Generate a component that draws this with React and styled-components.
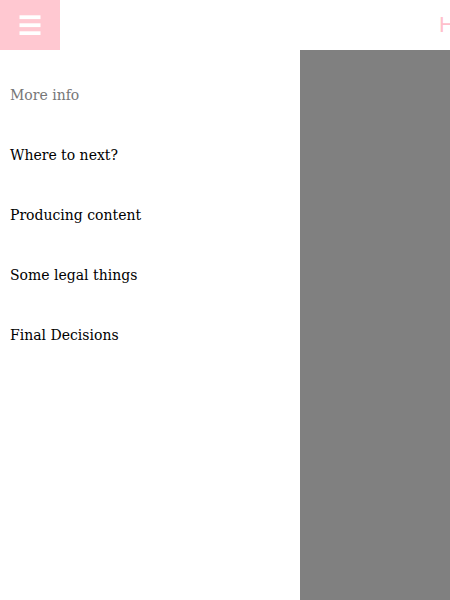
import styled, { createGlobalStyle } from 'styled-components';

const GlobalStyle = createGlobalStyle`
  html, body {
    margin: 0;
    padding: 0;
    background: #ffffff;
  }
  body {
    font-family: "DejaVu Serif", Georgia, serif;
    overflow: hidden;
  }
`;

const Page = styled.div`
  width: 450px;
  height: 600px;
  display: flex;
  flex-direction: column;
  overflow: hidden;
`;

const TopBar = styled.header`
  height: 50px;
  display: flex;
  align-items: center;
  overflow: hidden;
  flex-shrink: 0;
`;

const MenuButton = styled.button`
  flex-shrink: 0;
  width: 60px;
  height: 50px;
  border: none;
  padding: 0;
  background: #ffc8d1;
  display: flex;
  align-items: center;
  justify-content: center;
  cursor: pointer;
`;

const Title = styled.h1`
  flex-shrink: 0;
  margin: 0 0 0 379px;
  font-family: "Liberation Sans", Arial, sans-serif;
  font-weight: 400;
  font-size: 22px;
  color: #ffc0cb;
  white-space: nowrap;
`;

const Main = styled.div`
  flex: 1;
  display: flex;
`;

const Sidebar = styled.nav`
  width: 300px;
  flex-shrink: 0;
  padding-top: 15px;
`;

const NavItem = styled.a`
  display: flex;
  align-items: center;
  height: 60px;
  padding-left: 10px;
  font-size: 14px;
  color: ${p => (p.$muted ? '#777777' : '#000000')};
  text-decoration: none;
`;

const Content = styled.section`
  flex: 1;
  background: #808080;
`;

const items = [
  'More info',
  'Where to next?',
  'Producing content',
  'Some legal things',
  'Final Decisions',
];

function Bars() {
  return (
    <svg width="22" height="20" viewBox="0 0 22 20">
      <rect x="0.5" y="0.3" width="21" height="3.8" fill="#fff" />
      <rect x="0.5" y="8.3" width="21" height="3.8" fill="#fff" />
      <rect x="0.5" y="16.3" width="21" height="3.8" fill="#fff" />
    </svg>
  );
}

export default function App() {
  return (
    <>
      <GlobalStyle />
      <Page>
        <TopBar>
          <MenuButton aria-label="menu">
            <Bars />
          </MenuButton>
          <Title>Home</Title>
        </TopBar>
        <Main>
          <Sidebar>
            {items.map((label, i) => (
              <NavItem key={label} href="#" $muted={i === 0}>
                {label}
              </NavItem>
            ))}
          </Sidebar>
          <Content />
        </Main>
      </Page>
    </>
  );
}
